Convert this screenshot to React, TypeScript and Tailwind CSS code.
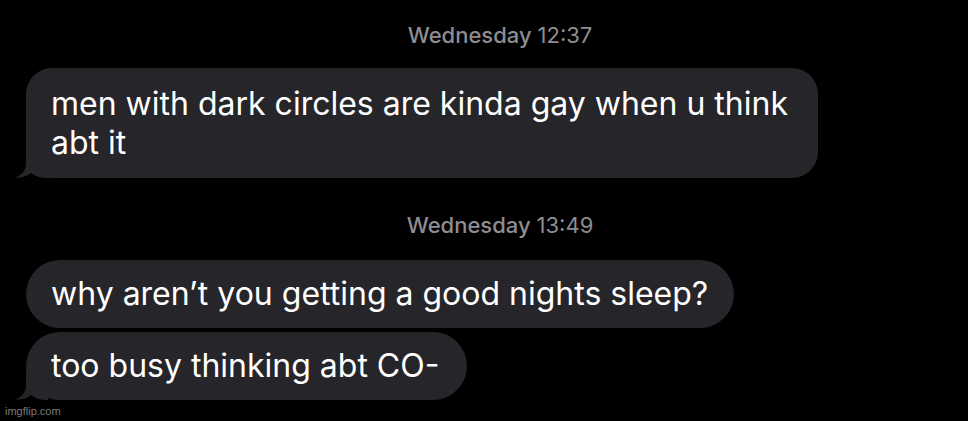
import { ReactNode } from 'react';

const BUBBLE = '#262529';

function Tail() {
  return (
    <svg
      className="absolute left-[-12px] bottom-0"
      width="34"
      height="30"
      viewBox="0 0 34 30"
      fill={BUBBLE}
    >
      <path d="M12 0 L12 16 C12 22 8 27 1 29.5 C7 30 13 28.5 17 25 C21 28 26 30 34 30 L34 0 Z" />
    </svg>
  );
}

function Stamp({ day, time }: { day: string; time: string }) {
  return (
    <div className="flex justify-center pl-[32px] text-[22px] leading-[26px] text-[#8d8d92]">
      <span className="font-medium">{day}</span>
      <span className="ml-[6px]">{time}</span>
    </div>
  );
}

function Bubble({ children, tail, className }: { children: ReactNode; tail?: boolean; className: string }) {
  return (
    <div className={`relative ml-[26px] rounded-[26px] px-[25px] text-[32px] text-white ${className}`} style={{ background: BUBBLE }}>
      {tail && <Tail />}
      <div className="relative">{children}</div>
    </div>
  );
}

export default function App() {
  return (
    <div
      className="relative w-[968px] h-[421px] overflow-hidden bg-black pt-[22px]"
      style={{ fontFamily: 'Inter, "Noto Sans", sans-serif' }}
    >
      <Stamp day="Wednesday" time="12:37" />
      <Bubble tail className="mt-[20px] w-[792px] py-[16px] leading-[39px]">
        men with dark circles are kinda gay when u think
        <br />
        abt it
      </Bubble>
      <div className="mt-[34px]">
        <Stamp day="Wednesday" time="13:49" />
      </div>
      <Bubble className="mt-[22px] w-[708px] py-[15px] leading-[38px] whitespace-nowrap rounded-[34px]">
        why aren’t you getting a good nights sleep?
      </Bubble>
      <Bubble tail className="mt-[4px] w-[441px] py-[15px] leading-[38px] whitespace-nowrap rounded-[34px]">
        too busy thinking abt CO-
      </Bubble>
      <div className="absolute left-[5px] bottom-[4px] text-[11px] leading-[12px] text-[#7a7a7a]" style={{ fontFamily: '"Liberation Sans", sans-serif' }}>
        imgflip.com
      </div>
    </div>
  );
}
